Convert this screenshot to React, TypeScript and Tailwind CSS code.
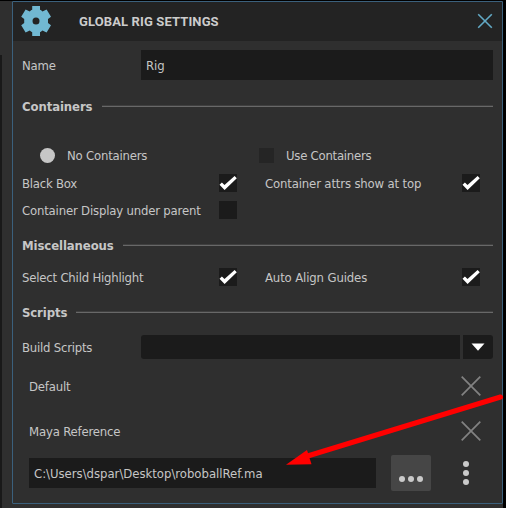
import React from "react";

function Check({ on = false }: { on?: boolean }) {
  return (
    <span className="block h-[18px] w-[18px] shrink-0 bg-[#1b1b1b]">
      {on && (
        <svg width="18" height="18" viewBox="0 0 18 18" className="block">
          <path d="M.5 10.7 2.9 8.4 5.5 10.9 15.6 2 17.8 4.2 5.6 16Z" fill="#fff" />
        </svg>
      )}
    </span>
  );
}

function Section({ title, spacing }: { title: string; spacing: string }) {
  return (
    <div className="flex h-[20px] items-center gap-[10px] pr-[9px] pl-[9px]">
      <h2 className={`shrink-0 pt-[2px] text-[13px] leading-[20px] font-bold ${spacing}`}>{title}</h2>
      <div className="h-[2px] flex-1 border-t border-[#3f3f3f] bg-[#686868]" />
    </div>
  );
}

function Cross() {
  return (
    <svg width="20" height="20" viewBox="0 0 20 20" className="block shrink-0">
      <path d="M.7.7 19.3 19.3M19.3.7.7 19.3" stroke="#828282" strokeWidth="1.7" />
    </svg>
  );
}

function ScriptRow({ name }: { name: string }) {
  return (
    <div className="flex h-[20px] items-center justify-between pr-[21px] pl-[16px]">
      <span className="pt-[2px] tracking-[-0.18px]">{name}</span>
      <Cross />
    </div>
  );
}

export default function App() {
  return (
    <div className="relative flex h-[508px] w-[506px] overflow-hidden bg-[#2f2f2f] font-['DejaVu_Sans_Condensed','DejaVu_Sans',sans-serif] text-[13px] leading-[18px] whitespace-nowrap text-[#c6c6c6] [font-stretch:condensed]">
      <div className="flex w-[12px] shrink-0 flex-col border-t border-black">
        <div className="mt-[54px] w-[2px] flex-1 bg-[#191919]" />
      </div>
      <div className="w-[491px] shrink-0 border-t border-black">
        <main className="h-[503px] rounded-[1px] border border-[#3b607c]">
          <header className="flex h-[39px] items-center bg-[#232323] pr-[9px] pb-px pl-[8px]">
            <svg width="30" height="30" viewBox="0 0 30 30" className="block shrink-0">
              <path fillRule="evenodd" fill="#71b8d2" d="M11.2 0h7.8v3.8q1.2.3 2.4 1.6L25.6 3.6 30 10.8 27 13v4l3 2.2-4.4 7.2-4.2-1.8q-1.2 1.3-2.4 1.6V30h-7.8v-3.8Q10 25.9 8.8 24.6L4.6 26.4 .2 19.2 3.2 17v-4L.2 10.8 4.6 3.6 8.8 5.4Q10 4.1 11.2 3.8ZM15 11.5a3.5 3.5 0 1 0 0 7a3.5 3.5 0 1 0 0-7Z" />
            </svg>
            <h1 className="ml-[28px] flex-1 pt-px font-[Roboto,sans-serif] text-[13px] font-bold tracking-[0.12px] text-[#cccccc] [font-stretch:normal]">GLOBAL RIG SETTINGS</h1>
            <svg width="16" height="16" viewBox="0 0 16 16" className="block">
              <path d="M1.2 1.2 14.8 14.8M14.8 1.2 1.2 14.8" stroke="#62a9c5" strokeWidth="1.6" />
            </svg>
          </header>

          <div className="mt-[9px] flex h-[30px] items-center pl-[9px]">
            <span className="w-[119px] pt-[2px] tracking-[-0.2px]">Name</span>
            <div className="flex h-[30px] w-[352px] items-center bg-[#1b1b1b] pt-[2px] pl-[5px] tracking-[-0.1px]">Rig</div>
          </div>

          <div className="mt-[16px]"><Section title="Containers" spacing="w-[70px] tracking-[-0.1px]" /></div>

          <div className="mt-[29px] flex h-[20px] items-center pl-[27px]">
            <span className="h-[15px] w-[15px] rounded-full bg-[#c6c6c6]" />
            <span className="ml-[12px] w-[192px] pt-[2px] tracking-[-0.2px]">No Containers</span>
            <span className="h-[15px] w-[15px] bg-[#252525]" />
            <span className="ml-[12px] pt-[2px] tracking-[-0.25px]">Use Containers</span>
          </div>
          <div className="mt-[9px] flex h-[18px] items-center pl-[9px]">
            <span className="w-[197px] pt-[2px] tracking-[-0.22px]">Black Box</span><Check on />
            <span className="ml-[28px] w-[197px] pt-[2px] tracking-[-0.15px]">Container attrs show at top</span><Check on />
          </div>
          <div className="mt-[9px] flex h-[18px] items-center pl-[9px]">
            <span className="w-[197px] pt-[2px] tracking-[-0.18px]">Container Display under parent</span><Check />
          </div>

          <div className="mt-[16px]"><Section title="Miscellaneous" spacing="w-[91px] tracking-[-0.1px]" /></div>
          <div className="mt-[13px] flex h-[18px] items-center pl-[9px]">
            <span className="w-[197px] pt-[2px] tracking-[-0.2px]">Select Child Highlight</span><Check on />
            <span className="ml-[28px] w-[197px] pt-[2px] tracking-[-0.13px]">Auto Align Guides</span><Check on />
          </div>

          <div className="mt-[16px]"><Section title="Scripts" spacing="w-[44px] tracking-[-0.12px]" /></div>
          <div className="mt-[13px] flex h-[24px] items-center pl-[9px]">
            <span className="w-[119px] pt-[2px] tracking-[-0.22px]">Build Scripts</span>
            <div className="h-[24px] w-[319px] rounded-l-[3px] bg-[#1b1b1b]" />
            <div className="ml-[3px] flex h-[24px] w-[30px] items-center justify-center rounded-r-[3px] bg-[#1b1b1b]">
              <svg width="14" height="8" viewBox="0 0 14 8"><path d="M.5.5h13L7 7.8Z" fill="#fff" /></svg>
            </div>
          </div>

          <div className="mt-[17px]"><ScriptRow name="Default" /></div>
          <div className="mt-[25px]"><ScriptRow name="Maya Reference" /></div>

          <div className="mt-[14px] flex h-[36px] items-center pl-[16px]">
            <div className="flex h-[30px] w-[347px] items-center bg-[#1b1b1b] pt-[2px] pl-[5px] tracking-[-0.02px]">C:\Users\dspar\Desktop\roboballRef.ma</div>
            <button className="ml-[15px] flex h-[36px] w-[40px] items-end justify-center gap-[3px] rounded-[2px] bg-[#464646] pb-[9px]">
              <i className="h-[6px] w-[6px] rounded-full bg-[#cacaca]" />
              <i className="h-[6px] w-[6px] rounded-full bg-[#cacaca]" />
              <i className="h-[6px] w-[6px] rounded-full bg-[#cacaca]" />
            </button>
            <button className="ml-[32px] flex flex-col gap-[3px]">
              <i className="h-[6px] w-[6px] rounded-full bg-[#cacaca]" />
              <i className="h-[6px] w-[6px] rounded-full bg-[#cacaca]" />
              <i className="h-[6px] w-[6px] rounded-full bg-[#cacaca]" />
            </button>
          </div>
        </main>
      </div>
      <div className="w-[3px] shrink-0 bg-black" />
      <svg width="506" height="508" viewBox="0 0 506 508" className="pointer-events-none absolute top-0 left-0">
        <path d="M500.5 397 306 456.5" stroke="#f00" strokeWidth="5" strokeLinecap="round" />
        <path d="M286 464.7 307 450l4.5 14.2Z" fill="#f00" />
      </svg>
    </div>
  );
}
